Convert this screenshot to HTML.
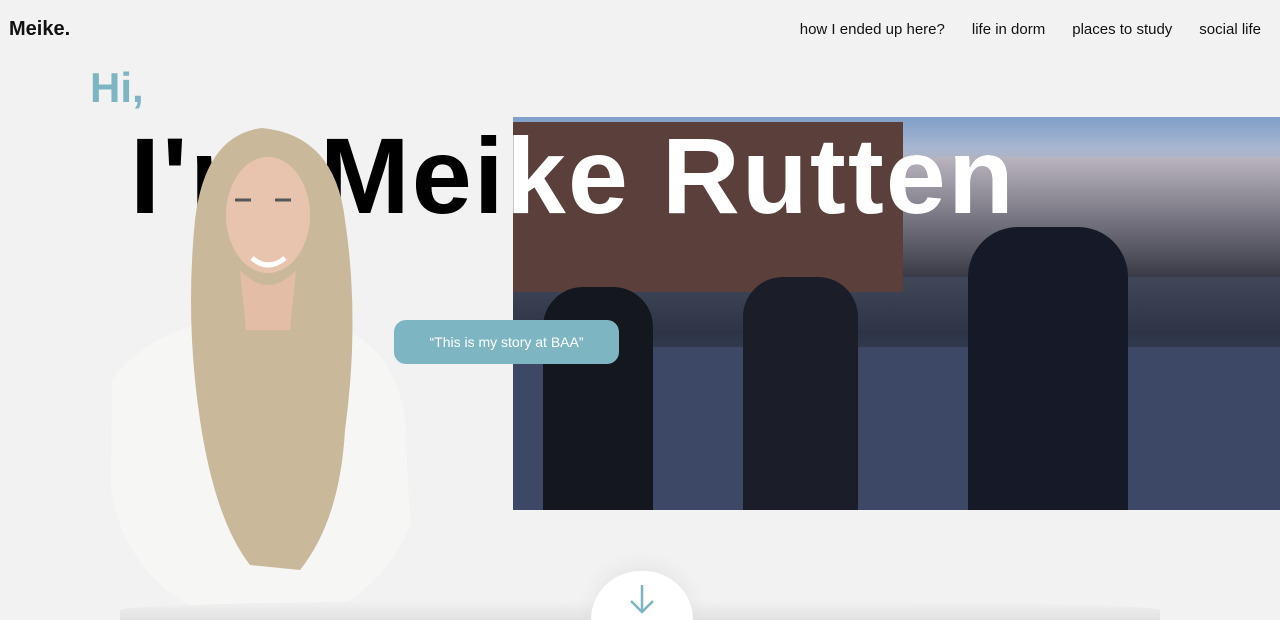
<!DOCTYPE html>
<html style="width:1280px;height:620px;overflow:hidden"><head><meta charset="utf-8"><style>
*{margin:0;padding:0;box-sizing:border-box}
body{width:1280px;height:620px;overflow:hidden;background:#f2f2f2;font-family:"Liberation Sans",sans-serif;position:relative}
.logo{position:absolute;left:9px;top:18px;font-size:20px;font-weight:bold;color:#111}
nav{position:absolute;top:21px;right:19px;font-size:15px;color:#111}
nav span{margin-left:27px}
.hi{position:absolute;left:90px;top:64px;font-size:42px;font-weight:bold;color:#7db5c2}
.big{position:absolute;left:130px;top:116px;font-size:108px;font-weight:bold;letter-spacing:2px;white-space:nowrap;line-height:120px}
.video{position:absolute;left:513px;top:117px;width:767px;height:393px;overflow:hidden;
background:linear-gradient(180deg,#7f9fca 0%,#a8b6d0 8%,#c9a99c 22%,#4a5060 34%,#2c3446 55%,#3d4a69 70%,#4a5877 100%)}
.bld{position:absolute;left:0;top:5px;width:390px;height:170px;background:#5a3f3a}
.clip{position:absolute;left:513px;top:117px;width:767px;height:393px;overflow:hidden}
.clip .big{left:-383px;top:-1px;color:#fff}
.quote{position:absolute;left:394px;top:320px;width:225px;height:44px;background:#7db5c2;border-radius:12px;color:#fff;font-size:14px;text-align:center;line-height:44px}
.down{position:absolute;left:591px;top:571px;width:102px;height:49px;border-radius:51px 51px 0 0;background:#fff;box-shadow:0 -6px 20px rgba(0,0,0,.05);overflow:hidden}
.shadow{position:absolute;left:120px;top:600px;width:1040px;height:20px;background:linear-gradient(#f2f2f2,#e2e2e2);border-radius:50% 50% 0 0}
</style></head><body>
<div class="logo">Meike.</div>
<nav><span>how I ended up here?</span><span>life in dorm</span><span>places to study</span><span>social life</span></nav>
<div class="hi">Hi,</div>
<div class="video">
<div class="bld"></div>
<div style="position:absolute;left:390px;top:40px;width:377px;height:120px;background:linear-gradient(#b9b4c0,#3a3a48)"></div>
<div style="position:absolute;left:0;top:230px;width:767px;height:163px;background:#3c4866"></div>
<div style="position:absolute;left:30px;top:170px;width:110px;height:225px;background:#15171f;border-radius:40px 40px 0 0"></div>
<div style="position:absolute;left:230px;top:160px;width:115px;height:235px;background:#1b1d28;border-radius:40px 40px 0 0"></div>
<div style="position:absolute;left:455px;top:110px;width:160px;height:285px;background:#161a28;border-radius:50px 50px 0 0"></div>
</div>
<div class="big">I'm Meike Rutten</div>
<div class="clip"><div class="big">I'm Meike Rutten</div></div>
<svg style="position:absolute;left:0;top:0" width="1280" height="620">
<defs><clipPath id="c"><path d="M100 300 L420 300 L420 470 A150 150 0 0 1 110 470 Z"/></clipPath></defs>
<g clip-path="url(#c)"><path d="M112 380 Q150 330 220 320 L320 320 Q395 340 405 420 L415 620 L110 620 Z" fill="#f6f6f4"/></g>
<path d="M262 128 Q205 135 195 220 Q185 320 200 420 Q215 520 250 565 L300 570 Q340 520 345 430 Q360 320 345 220 Q335 135 262 128Z" fill="#c9b89a"/>
<ellipse cx="268" cy="215" rx="42" ry="58" fill="#e8c4ae"/>
<path d="M235 200 h16 M275 200 h16" stroke="#555" stroke-width="3"/>
<path d="M252 258 Q268 272 285 258" stroke="#fff" stroke-width="5" fill="none"/>
<path d="M240 270 Q268 300 296 270 L290 330 L246 330Z" fill="#e3bda6"/>
</svg>
<div class="quote">“This is my story at BAA”</div>
<div class="shadow"></div>
<div class="down"><svg width="102" height="49"><path d="M51 14 V40 M40 30 L51 41 L62 30" stroke="#7db5c2" stroke-width="2.5" fill="none"/></svg></div>
</body></html>
